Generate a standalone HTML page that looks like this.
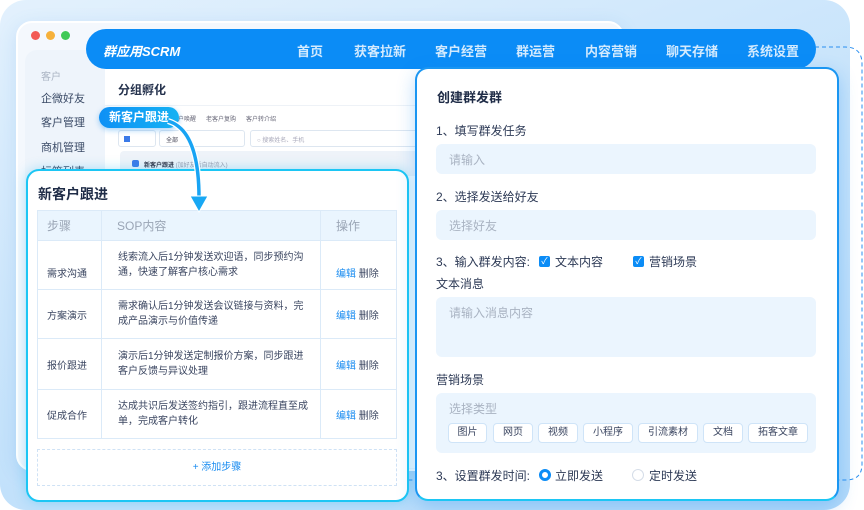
<!DOCTYPE html>
<html><head><meta charset="utf-8"><style>
*{margin:0;padding:0;box-sizing:border-box}
body{width:864px;height:510px;overflow:hidden;background:#fff;font-family:"Liberation Sans","Noto Sans CJK SC",sans-serif;position:relative}
.a{position:absolute}
.bg{left:0;top:0;width:850px;height:510px;border-radius:26px;background:linear-gradient(160deg,#e3f1fd 0%,#c6e3fb 50%,#b4dafa 100%)}
.win{left:16px;top:21px;width:608px;height:450px;border-radius:16px;background:#f4f8fd;border:2px solid #fff;box-shadow:0 4px 18px rgba(60,140,220,.15)}
.dot{width:9px;height:9px;border-radius:50%;top:31px}
.side{left:25px;top:50px;width:90px;height:410px;background:#eef4fb;border-radius:12px}
.si{font-size:11px;color:#3a4a66;left:41px}
.main{left:105px;top:68px;width:515px;height:400px;background:#fff}
.nav{left:86px;top:29px;width:730px;height:40px;border-radius:20px;background:#0b8cf6}
.ni{top:41px;font-size:13px;color:rgba(255,255,255,.82);font-weight:bold}
.card{background:#fff;border-radius:13px}
.lc{left:26px;top:169px;width:383px;height:333px;border:2px solid #1cc6f4;box-shadow:0 0 12px rgba(30,180,240,.35)}
.rc{left:415px;top:67px;width:424px;height:434px;border:2px solid #1a96f2;border-bottom-color:#1cc6f4;box-shadow:0 6px 18px rgba(30,140,240,.3)}
table{border-collapse:collapse;position:absolute;left:37px;top:210px;width:360px;font-size:10px;color:#3a4560}
td{border:1px solid #dbeaf8;vertical-align:middle}
th{border:1px solid #dbeaf8;background:#eaf5fe;color:#9aa5b5;font-weight:normal;text-align:left;font-size:12px;height:30px}
.lab{font-size:12px;color:#2d3a56;left:436px}
.inp{left:436px;width:380px;background:#ebf5fe;border-radius:6px;font-size:12px;color:#a9b3c2}
.tag{top:423px;height:20px;border:1px solid #cfe4f8;border-radius:4px;background:#fff;font-size:10px;color:#3a4560;text-align:center;line-height:18px}
.cb{width:11px;height:11px;background:#0b8cf6;border-radius:2px;color:#fff;font-size:9px;line-height:11px;text-align:center}
</style></head><body>
<div class="a bg"></div>
<svg class="a" style="left:0;top:0" width="864" height="510"><path d="M815 47 H845 Q862 47 862 64 V464 Q862 480 846 480 H405" fill="none" stroke="#2a8ff0" stroke-width="1" stroke-dasharray="4 3"/></svg>
<div class="a win"></div>
<div class="a dot" style="left:31px;background:#f25a55"></div>
<div class="a dot" style="left:46px;background:#f6b13b"></div>
<div class="a dot" style="left:61px;background:#3fc957"></div>
<div class="a side"></div>
<div class="a si" style="top:68px;color:#aab4c3;font-size:10px">客户</div>
<div class="a si" style="top:90px">企微好友</div>
<div class="a si" style="top:114px">客户管理</div>
<div class="a si" style="top:139px">商机管理</div>
<div class="a si" style="top:163px">标签列表</div>
<div class="a main"></div>
<div class="a" style="left:118px;top:81px;font-size:12px;font-weight:bold;color:#25324d">分组孵化</div>
<div class="a" style="left:105px;top:105px;width:515px;height:1px;background:#eef2f7"></div>
<div class="a" style="left:178px;top:114px;font-size:6px;color:#667">户唤醒 &nbsp;&nbsp;&nbsp;&nbsp; 老客户复购 &nbsp;&nbsp;&nbsp;&nbsp; 客户转介绍</div>
<div class="a" style="left:118px;top:130px;width:38px;height:17px;border:1px solid #dde6f0;border-radius:3px"></div>
<div class="a" style="left:124px;top:136px;width:6px;height:6px;background:#3b7ae8"></div>
<div class="a" style="left:159px;top:130px;width:86px;height:17px;border:1px solid #dde6f0;border-radius:3px;font-size:6px;color:#445;padding:4px 6px">全部</div>
<div class="a" style="left:250px;top:130px;width:170px;height:17px;border:1px solid #dde6f0;border-radius:3px;font-size:6px;color:#aab;padding:4px 6px">○ 搜索姓名、手机</div>
<div class="a" style="left:120px;top:151px;width:300px;height:25px;background:#eef3f9;border-radius:4px"></div>
<div class="a" style="left:132px;top:160px;width:7px;height:7px;background:#3b7ae8;border-radius:2px"></div>
<div class="a" style="left:144px;top:160px;font-size:6px;color:#334;font-weight:bold">新客户跟进 <span style="font-weight:normal;color:#99a">(加好友后自动流入)</span></div>
<div class="a nav"></div>
<div class="a" style="left:103px;top:41px;font-size:13px;color:#fff;font-weight:bold;font-style:italic">群应用SCRM</div>
<div class="a ni" style="left:297px">首页</div>
<div class="a ni" style="left:354px">获客拉新</div>
<div class="a ni" style="left:435px">客户经营</div>
<div class="a ni" style="left:516px">群运营</div>
<div class="a ni" style="left:585px">内容营销</div>
<div class="a ni" style="left:666px">聊天存储</div>
<div class="a ni" style="left:747px">系统设置</div>

<div class="a card lc"></div>
<div class="a" style="left:38px;top:184px;font-size:14px;font-weight:bold;color:#1f2c47">新客户跟进</div>
<table>
<tr><th style="width:64px;padding-left:9px">步骤</th><th style="width:219px;padding-left:15px">SOP内容</th><th style="padding-left:15px">操作</th></tr>
<tr style="height:49px"><td style="padding:14px 0 0 9px">需求沟通</td><td style="padding:0 12px 0 16px;line-height:15px">线索流入后1分钟发送欢迎语，同步预约沟通，快速了解客户核心需求</td><td style="padding:14px 0 0 15px"><span style="color:#1a8cf0">编辑</span> 删除</td></tr>
<tr style="height:49px"><td style="padding-left:9px">方案演示</td><td style="padding:0 12px 0 16px;line-height:15px">需求确认后1分钟发送会议链接与资料，完成产品演示与价值传递</td><td style="padding-left:15px"><span style="color:#1a8cf0">编辑</span> 删除</td></tr>
<tr style="height:51px"><td style="padding-left:9px">报价跟进</td><td style="padding:0 12px 0 16px;line-height:15px">演示后1分钟发送定制报价方案，同步跟进客户反馈与异议处理</td><td style="padding-left:15px"><span style="color:#1a8cf0">编辑</span> 删除</td></tr>
<tr style="height:49px"><td style="padding-left:9px">促成合作</td><td style="padding:0 12px 0 16px;line-height:15px">达成共识后发送签约指引，跟进流程直至成单，完成客户转化</td><td style="padding-left:15px"><span style="color:#1a8cf0">编辑</span> 删除</td></tr>
</table>
<div class="a" style="left:37px;top:449px;width:360px;height:37px;border:1px dashed #cfe2f5;font-size:10px;color:#1a8cf0;text-align:center;line-height:36px">+ 添加步骤</div>

<div class="a" style="left:99px;top:107px;width:80px;height:21px;border-radius:11px;background:linear-gradient(90deg,#0e90f5,#16b2f3);color:#fff;font-size:12px;font-weight:bold;line-height:21px;text-align:center;box-shadow:0 2px 6px rgba(20,140,240,.4)">新客户跟进</div>
<svg class="a" style="left:0;top:0" width="864" height="510"><path d="M168 121 Q199 130 199 198" fill="none" stroke="#fff" stroke-width="6"/><path d="M168 121 Q199 130 199 198" fill="none" stroke="#18a4f4" stroke-width="3.5"/><path d="M190 196 L199 212 L208 196 Z" fill="#18a8f4" stroke="#fff" stroke-width="1"/></svg>

<div class="a card rc"></div>
<div class="a" style="left:437px;top:87px;font-size:13px;font-weight:bold;color:#1f2c47">创建群发群</div>
<div class="a lab" style="top:122px">1、填写群发任务</div>
<div class="a inp" style="top:144px;height:30px;padding:7px 13px">请输入</div>
<div class="a lab" style="top:188px">2、选择发送给好友</div>
<div class="a inp" style="top:210px;height:30px;padding:7px 13px">选择好友</div>
<div class="a lab" style="top:253px">3、输入群发内容:</div>
<div class="a cb" style="left:539px;top:256px">✓</div>
<div class="a lab" style="left:555px;top:253px">文本内容</div>
<div class="a cb" style="left:633px;top:256px">✓</div>
<div class="a lab" style="left:649px;top:253px">营销场景</div>
<div class="a lab" style="top:275px">文本消息</div>
<div class="a inp" style="top:297px;height:60px;padding:7px 13px">请输入消息内容</div>
<div class="a lab" style="top:371px">营销场景</div>
<div class="a inp" style="top:393px;height:60px;padding:7px 13px">选择类型</div>
<div class="a tag" style="left:448px;width:39px">图片</div>
<div class="a tag" style="left:493px;width:40px">网页</div>
<div class="a tag" style="left:538px;width:40px">视频</div>
<div class="a tag" style="left:583px;width:50px">小程序</div>
<div class="a tag" style="left:638px;width:60px">引流素材</div>
<div class="a tag" style="left:703px;width:40px">文档</div>
<div class="a tag" style="left:748px;width:60px">拓客文章</div>
<div class="a lab" style="top:467px">3、设置群发时间:</div>
<div class="a" style="left:539px;top:469px;width:12px;height:12px;border-radius:50%;border:3px solid #0b8cf6;background:#fff"></div>
<div class="a lab" style="left:555px;top:467px">立即发送</div>
<div class="a" style="left:632px;top:469px;width:12px;height:12px;border-radius:50%;border:1px solid #d5dde8;background:#fff"></div>
<div class="a lab" style="left:649px;top:467px">定时发送</div>
</body></html>
